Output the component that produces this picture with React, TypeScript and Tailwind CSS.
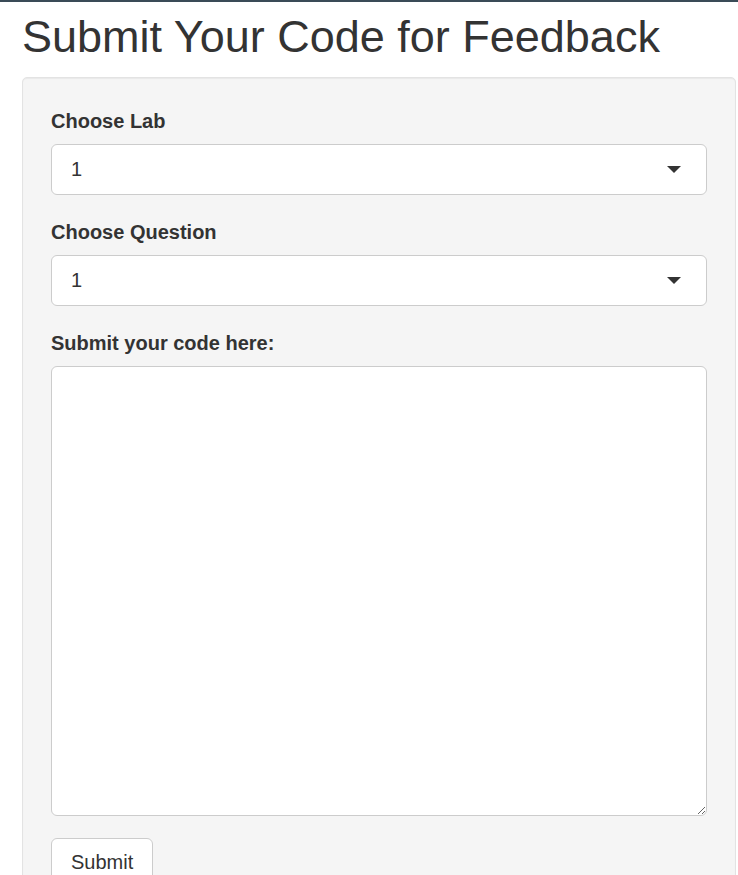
import React from "react";

const SelectBox: React.FC<{ value: string }> = ({ value }) => (
  <div className="flex h-[51px] items-center justify-between rounded-[6px] border border-[#cccccc] bg-white pl-[19px] pr-[25px] text-[20px] text-[#333333]">
    <span>{value}</span>
    <svg width="14" height="7" viewBox="0 0 14 7" className="block">
      <path d="M0 0 L14 0 L7 7 Z" fill="#333333" />
    </svg>
  </div>
);

const Field: React.FC<{ label: string; children: React.ReactNode }> = ({ label, children }) => (
  <div className="mb-[22.5px]">
    <label className="mb-[8px] block pt-[1px] text-[20px] font-bold leading-[28.6px] text-[#333333]">{label}</label>
    {children}
  </div>
);

export default function App() {
  return (
    <div className="min-h-[875px] overflow-hidden bg-white font-['Liberation_Sans',Arial,sans-serif] text-[#333333]">
      <div className="h-[2px] bg-[#3a4b57]" />
      <div className="pl-[22px] pr-[2px]">
        <h1 className="mt-[10px] mb-[15.5px] text-[45px] leading-[1.1] font-normal text-[#333333]">
          Submit Your Code for Feedback
        </h1>
        <div className="rounded-[5px] border border-[#e3e3e3] bg-[#f5f5f5] px-[28px] pt-[28px] pb-[30px] shadow-[inset_0_1px_1px_rgba(0,0,0,0.05)]">
          <Field label="Choose Lab">
            <SelectBox value="1" />
          </Field>
          <Field label="Choose Question">
            <SelectBox value="1" />
          </Field>
          <Field label="Submit your code here:">
            <textarea className="block h-[450px] w-full resize-y rounded-[6px] border border-[#cccccc] bg-white p-[10px] text-[20px] outline-none" />
          </Field>
          <button className="h-[48px] rounded-[6px] border border-[#cccccc] bg-white px-[19px] text-[20px] text-[#333333]">
            Submit
          </button>
        </div>
      </div>
    </div>
  );
}
